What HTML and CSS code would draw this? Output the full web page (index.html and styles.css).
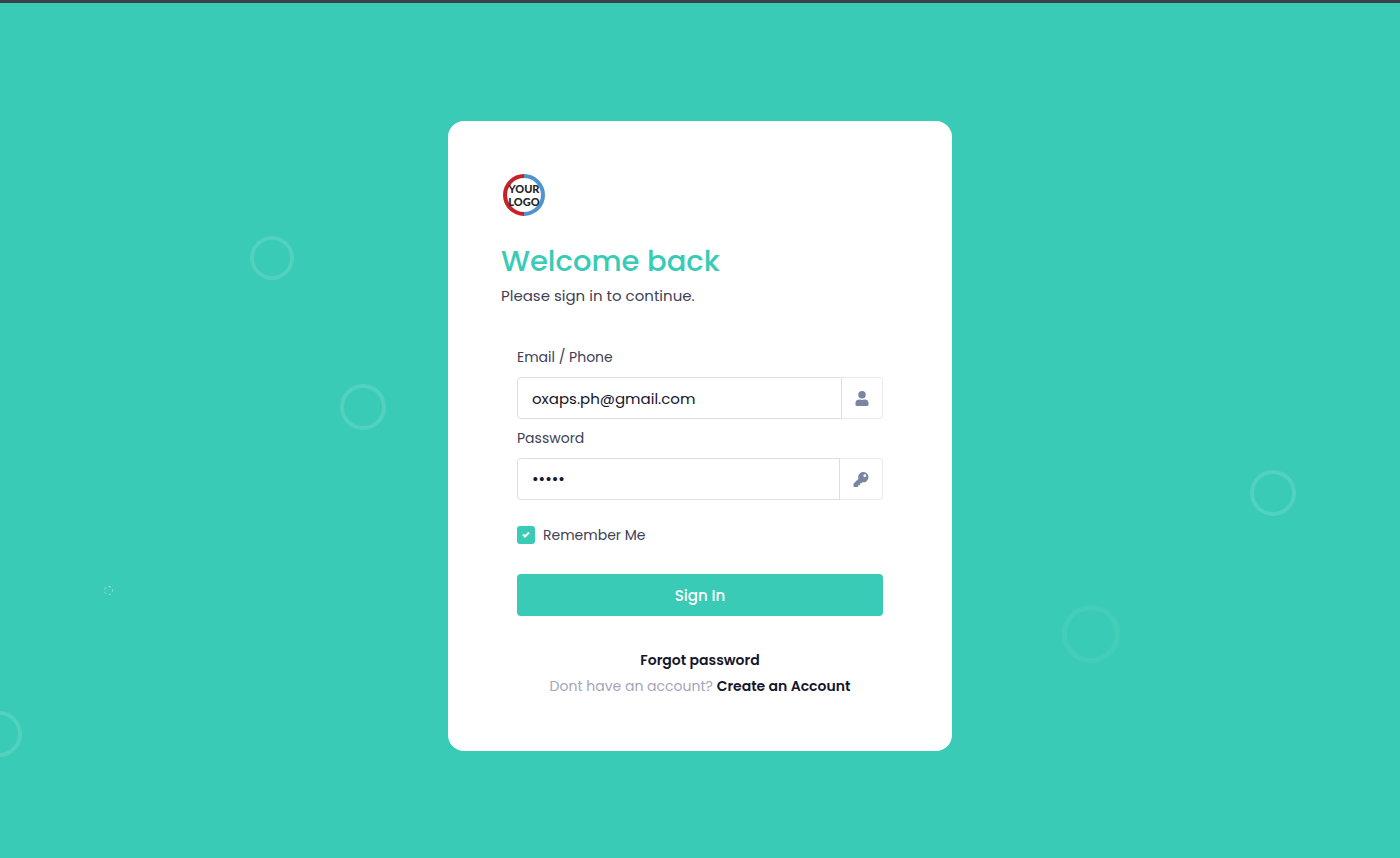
FILE: index.html
```html
<!DOCTYPE html>
<html lang="en">
<head>
<meta charset="utf-8">
<meta name="viewport" content="width=device-width, initial-scale=1">
<title>Sign in</title>
<link rel="stylesheet" href="styles.css">
</head>
<body class="page">
<div class="bubbles" aria-hidden="true">
  <span class="bubble bubble-a"></span>
  <span class="bubble bubble-b"></span>
  <span class="bubble bubble-c"></span>
  <span class="bubble bubble-d"></span>
  <span class="bubble bubble-e"></span>
  <span class="bubble bubble-f"></span>
</div>
<main class="card">
  <svg class="logo" viewBox="0 0 46 46" role="img" aria-label="Your logo">
    <path d="M23 4a19 19 0 0 0 0 38" fill="none" stroke="#c92127" stroke-width="4"/>
    <path d="M23 4a19 19 0 0 1 0 38" fill="none" stroke="#4f93cf" stroke-width="4"/>
    <text class="logo-text" x="23" y="21" text-anchor="middle">YOUR</text>
    <text class="logo-text" x="23" y="34" text-anchor="middle">LOGO</text>
  </svg>
  <h1 class="title">Welcome back</h1>
  <p class="subtitle">Please sign in to continue.</p>
  <form class="form">
    <label class="label" for="email">Email / Phone</label>
    <div class="group">
      <input class="input" id="email" type="text" value="oxaps.ph@gmail.com">
      <span class="addon"><svg class="icon-user" viewBox="0 0 448 512" aria-hidden="true"><path d="M224 256a128 128 0 1 0 0-256 128 128 0 0 0 0 256zm89.600 32h-16.700a174 174 0 0 1-145.800 0h-16.700A134.400 134.400 0 0 0 0 422.400V464a48 48 0 0 0 48 48h352a48 48 0 0 0 48-48v-41.600A134.400 134.400 0 0 0 313.600 288z"/></svg></span>
    </div>
    <label class="label" for="password">Password</label>
    <div class="group">
      <input class="input password" id="password" type="password" value="oxaps">
      <span class="addon"><svg class="icon-key" viewBox="0 0 512 512" aria-hidden="true"><path d="M512 176a176 176 0 0 1-209 173l-24 27a24 24 0 0 1-18 8h-37v40a24 24 0 0 1-24 24h-40v40a24 24 0 0 1-24 24H24a24 24 0 0 1-24-24v-78a24 24 0 0 1 7-17l162-162A176 176 0 1 1 512 176zm-176-48a48 48 0 1 0 96 0 48 48 0 0 0-96 0z"/></svg></span>
    </div>
    <label class="remember"><input class="check" type="checkbox" checked>Remember Me</label>
    <button class="submit" type="button">Sign In</button>
    <div class="links">
      <a class="link" href="#forgot">Forgot password</a>
      <p class="signup">Dont have an account? <a class="link" href="#register">Create an Account</a></p>
    </div>
  </form>
</main>
</body>
</html>
```
FILE: styles.css
```css
* {
  box-sizing: border-box;
}

.page {
  margin: 0;
  min-height: 100vh;
  padding: 11px 16px 0;
  display: flex;
  align-items: center;
  justify-content: center;
  position: relative;
  overflow-x: hidden;
  border-top: 3px solid #3d4044;
  background: #39cbb6;
  color: #3e4155;
  font-family: Poppins, Inter, "Open Sans", sans-serif;
  font-size: 14px;
  line-height: 22px;
}

.bubbles {
  position: absolute;
  inset: 0;
  overflow: hidden;
  pointer-events: none;
}

.bubble {
  position: absolute;
  width: 46px;
  height: 46px;
  border: 4px solid rgba(255, 255, 255, 0.12);
  border-radius: 50%;
}

.bubble-a { left: 250px; top: 233px; width: 44px; height: 44px; }
.bubble-b { left: 340px; top: 381px; }
.bubble-c { left: 1250px; top: 467px; }
.bubble-d {
  left: 1062px;
  top: 602px;
  width: 58px;
  height: 58px;
  border-width: 5px;
  border-color: rgba(255, 255, 255, 0.06);
}
.bubble-e { left: -24px; top: 708px; }
.bubble-f {
  left: 104px;
  top: 583px;
  width: 9px;
  height: 9px;
  border: 1px dashed rgba(255, 255, 255, 0.4);
}

.card {
  position: relative;
  width: 100%;
  max-width: 504px;
  padding: 51px 53px 52px;
  border-radius: 16px;
  background: #fff;
}

.logo {
  display: block;
  width: 46px;
  height: 46px;
}

.logo-text {
  fill: #252525;
  font-family: Lato, sans-serif;
  font-size: 11px;
  font-weight: 900;
}

.title {
  margin: 24px 0 4px;
  color: #39cbb6;
  font-size: 29px;
  font-weight: 500;
  line-height: 38px;
}

.subtitle {
  margin: 0 0 38px;
  font-size: 15px;
  line-height: 24px;
}

.form {
  padding: 0 16px;
}

.label {
  display: block;
  margin-bottom: 9px;
}

.group {
  display: flex;
  height: 42px;
  margin-bottom: 8px;
}

.input {
  flex: 1;
  min-width: 0;
  padding: 0 14px;
  border: 1px solid #dddfe1;
  border-radius: 4px 0 0 4px;
  outline: 0;
  background: #fff;
  color: #15152b;
  font-family: inherit;
  font-size: 15px;
}

.password {
  padding-bottom: 2px;
  font-size: 16px;
}

.addon {
  display: flex;
  align-items: center;
  padding: 0 13px;
  border: 1px solid #eaeaf4;
  border-left: 0;
  border-radius: 0 4px 4px 0;
}

.icon-user,
.icon-key {
  display: block;
  width: 14px;
  height: 15px;
  fill: #7886a4;
}

.icon-key {
  width: 16px;
}

.remember {
  display: flex;
  align-items: center;
  gap: 8px;
  margin: 24px 0 28px;
}

.check {
  appearance: none;
  width: 18px;
  height: 18px;
  margin: 0;
  border-radius: 3px;
  background: #39cbb6 url("data:image/svg+xml,%3Csvg xmlns='http://www.w3.org/2000/svg' viewBox='0 0 18 18'%3E%3Cpath d='M6 8.500 8 10.500 12 6.500' fill='none' stroke='white' stroke-width='2'/%3E%3C/svg%3E") center / 18px no-repeat;
}

.submit {
  display: block;
  width: 100%;
  height: 42px;
  padding: 0;
  border: 0;
  border-radius: 4px;
  background: #39cbb6;
  color: #fff;
  font-family: inherit;
  font-size: 15px;
  font-weight: 500;
}

.links {
  margin-top: 31px;
  text-align: center;
  line-height: 26px;
}

.link {
  color: #15152b;
  font-weight: 600;
  text-decoration: none;
}

.signup {
  margin: 0;
  color: #a7a4b8;
}
```
